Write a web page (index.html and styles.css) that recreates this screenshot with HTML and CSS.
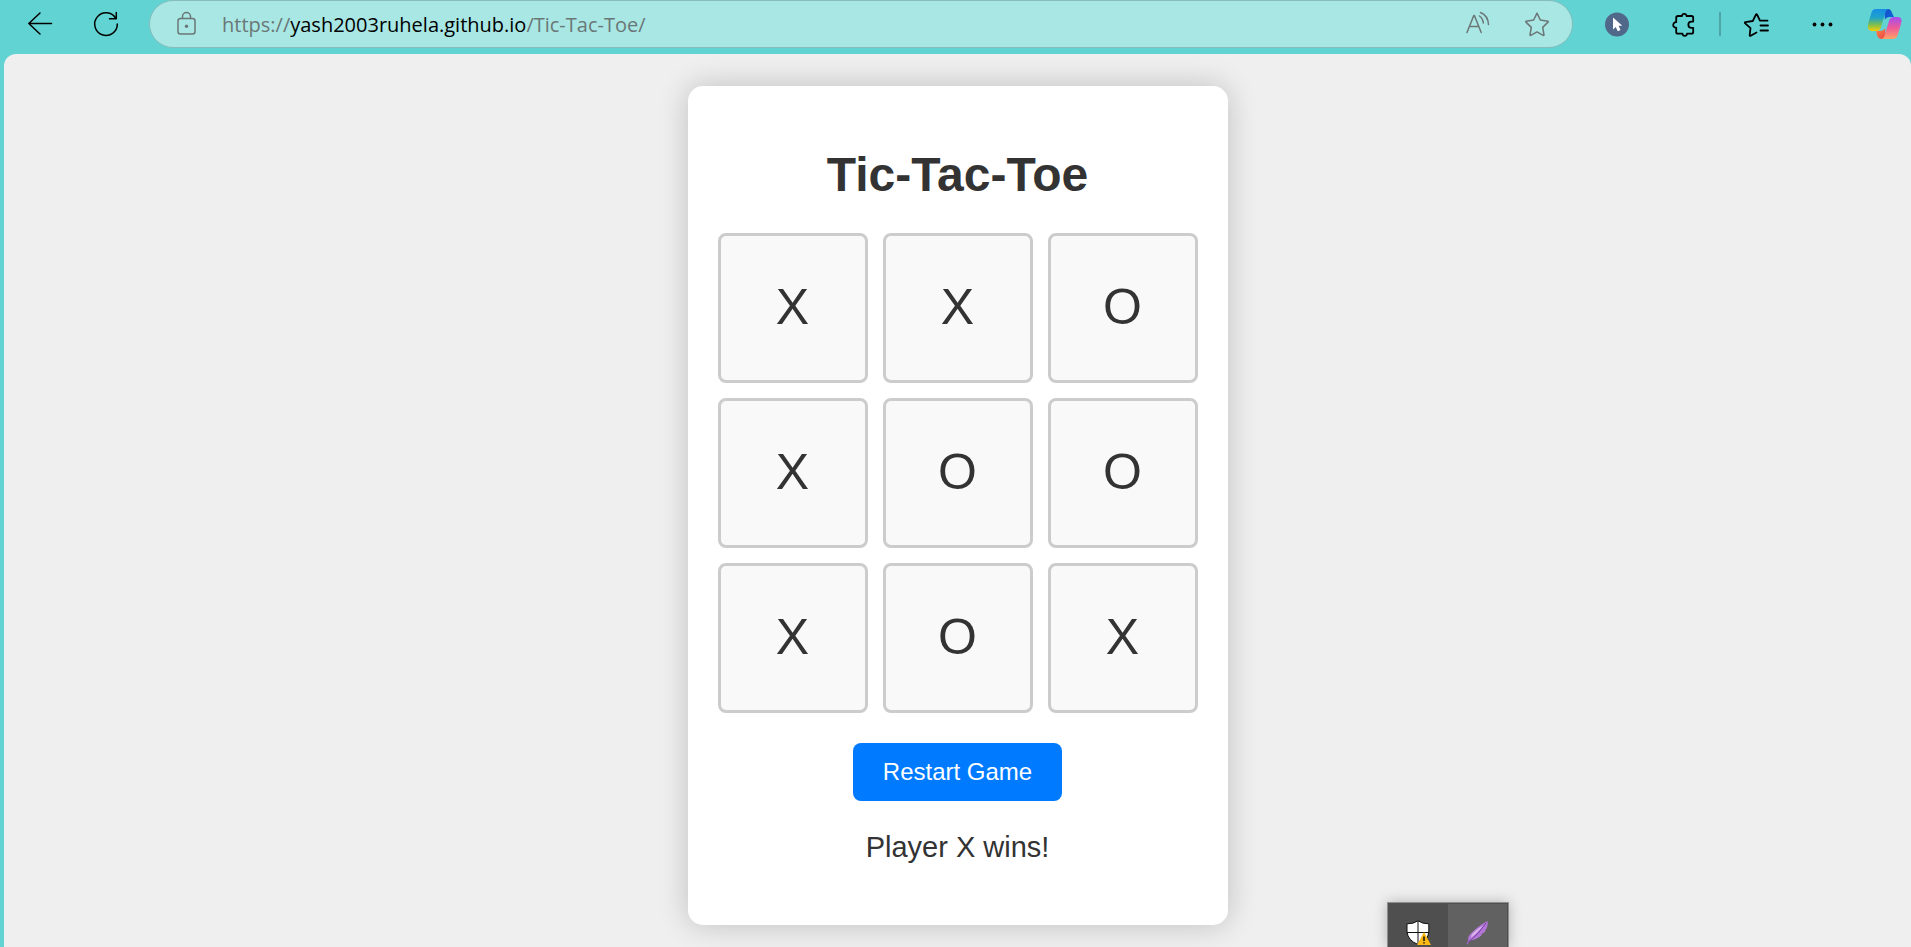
FILE: index.html
```html
<!DOCTYPE html>
<html lang="en">
<head>
<meta charset="utf-8">
<title>Tic-Tac-Toe</title>
<link rel="stylesheet" href="styles.css">
</head>
<body>
<header class="toolbar">
  <button class="tool" type="button" aria-label="Back">
    <svg class="icon" viewBox="0 0 24 24"><path d="M23.500 11.500H.8M12 1 .8 11.500 12 22"/></svg>
  </button>
  <button class="tool" type="button" aria-label="Refresh">
    <svg class="icon" viewBox="0 0 24 24"><path d="M21.800 6.500A11.300 11.300 0 1 0 23.300 12M22.300.5V6.800H15.500"/></svg>
  </button>
  <div class="address">
    <button class="address-tool lock" type="button" aria-label="Site information">
      <svg class="icon" viewBox="0 0 24 24"><rect x="4" y="6.500" width="17" height="15.500" rx="2.500"/><path d="M8.500 6.500V4.500a4 4 0 0 1 8 0v2"/><circle class="solid" cx="12.500" cy="14.200" r="1.700"/></svg>
    </button>
    <div class="url" role="textbox" contenteditable="true" spellcheck="false" aria-label="Address">https://<span class="host">yash2003ruhela.github.io</span>/Tic-Tac-Toe/</div>
    <button class="address-tool" type="button" aria-label="Read aloud">
      <svg class="icon" viewBox="0 0 24 24"><path d="M2 20.500 8.800 3.500h.6L16.200 20.500M4.500 14.500h9.300M14.500 4Q18 6.500 18.300 11M15.500 .5Q23 3.500 23.500 12.500"/></svg>
    </button>
    <button class="address-tool" type="button" aria-label="Add to favorites">
      <svg class="icon" viewBox="0 0 24 24"><path d="M12 1.200 15.300 8 22.900 9.200Q23.600 9.500 23 10.100L17.700 15.400 19 22.800Q18.900 23.600 18.200 23.300L12 19.900 5.800 23.300Q5 23.600 5 22.800L6.300 15.400 1 10.100Q.4 9.500 1.100 9.200L8.700 8Z"/></svg>
    </button>
  </div>
  <button class="tool" type="button" aria-label="Cursor extension">
    <svg class="icon" viewBox="0 0 24 24"><circle class="badge" cx="12" cy="12.500" r="12"/><path class="pointer" d="M8 5.500v12l2.800-2.500 1.900 4.200 2.800-1.200-1.900-4.200h3.700Z"/></svg>
  </button>
  <button class="tool" type="button" aria-label="Extensions">
    <svg class="icon bold" viewBox="0 0 24 24"><path d="M7 4H11C11.200 1.200 15.300 1.200 15.500 4H20.500Q22.200 4 22.200 5.800V9.600H20.500C16.300 9.600 16.300 15.900 20.500 15.900H22.200V20Q22.200 21.700 20.500 21.700H16C15.800 24.500 11.700 24.500 11.500 21.700H7Q5.200 21.700 5.200 20V15.700C1.200 15.900 1.200 10 5.200 10.200V5.800Q5.200 4 7 4"/></svg>
  </button>
  <span class="divider"></span>
  <button class="tool" type="button" aria-label="Favorites">
    <svg class="icon bold" viewBox="0 0 24 24"><path d="M11.500 20.500 5.700 23.800Q4.600 24.200 4.700 23L5.500 16.100-.1 11.100Q-.5 10.400.4 10.200L7.800 9 11 2.400Q11.500 1.900 12 2.500L15 8.700H22.500M15.500 13.500H23M15.500 18.500H23"/></svg>
  </button>
  <button class="tool" type="button" aria-label="Settings and more">
    <svg class="icon" viewBox="0 0 24 24"><g class="solid"><circle cx="3.500" cy="12.500" r="1.900"/><circle cx="11.500" cy="12.500" r="1.900"/><circle cx="19.500" cy="12.500" r="1.900"/></g></svg>
  </button>
  <button class="tool copilot" type="button" aria-label="Copilot">
    <svg class="logo" viewBox="0 0 36 32">
      <defs>
        <linearGradient id="cool" x1="0" y1="0" x2="0" y2="1"><stop offset="0" stop-color="#168de6"/><stop offset=".4" stop-color="#20a4c8"/><stop offset=".7" stop-color="#78bd55"/><stop offset="1" stop-color="#f8d000"/></linearGradient>
        <linearGradient id="warm" x1="0" y1="0" x2="0" y2="1"><stop offset="0" stop-color="#a34df0"/><stop offset=".5" stop-color="#ef5b98"/><stop offset="1" stop-color="#ffa463"/></linearGradient>
        <linearGradient id="fold" x1="0" y1="0" x2="1" y2="1"><stop offset="0" stop-color="#1b4bc9"/><stop offset="1" stop-color="#0c6adc"/></linearGradient>
        <linearGradient id="ember" x1="0" y1="0" x2="1" y2="1"><stop offset="0" stop-color="#ff8b42"/><stop offset="1" stop-color="#e8414a"/></linearGradient>
      </defs>
      <path fill="url(#fold)" d="M17 1H21Q24 1 25 5L27 9H23Q19 9 18 12Z"/>
      <path fill="url(#ember)" d="M9 23H13Q17 23 18 20L19 31H15Q11 31 10 27Z"/>
      <path fill="url(#cool)" d="M9 1H22Q19 1 18 6L14 19Q13 23 9 23H5Q0 23 1 16L4 6Q5 1 9 1Z"/>
      <path fill="url(#warm)" d="M27 9H31Q36 9 34 16L31 26Q30 31 26 31H14Q17 31 18 26L22 13Q23 9 27 9Z"/>
    </svg>
  </button>
</header>

<main class="page">
  <section class="card">
    <h1 class="title">Tic-Tac-Toe</h1>
    <div class="board">
      <button class="cell" type="button">X</button>
      <button class="cell" type="button">X</button>
      <button class="cell" type="button">O</button>
      <button class="cell" type="button">X</button>
      <button class="cell" type="button">O</button>
      <button class="cell" type="button">O</button>
      <button class="cell" type="button">X</button>
      <button class="cell" type="button">O</button>
      <button class="cell" type="button">X</button>
    </div>
    <button class="restart" type="button">Restart Game</button>
    <p class="status">Player X wins!</p>
  </section>
</main>

<aside class="tray">
  <button class="tray-item" type="button" aria-label="Security">
    <svg class="tray-icon" viewBox="0 0 24 26">
      <path fill="#fff" stroke="#111" d="M12 .8Q16.500 4 22.800 3.800V12Q22 20.500 12 24.500 2 20.500 1 12V3.800Q7.500 4 12 .8Z"/>
      <path stroke="#111" d="M12 1V24M1 12.500H23"/>
      <path fill="#fdb913" d="M18 12 25 25H11Z"/>
      <path stroke="#111" stroke-width="1.500" d="M18 16.500V21M18 22.200V23.600"/>
    </svg>
  </button>
  <button class="tray-item light" type="button" aria-label="Feather">
    <svg class="tray-icon" viewBox="0 0 24 26">
      <path fill="#b277d6" d="M22.500 1Q13 6 6 13.500 2 17 3.500 20L1.500 24 2.500 24.500 5 20.500Q12 19.500 17 15L16 14.500 20.500 11.500 20 10.500Q23.500 7 22.500 1Z"/>
      <path fill="#d9b5ec" d="M19 5Q10 10 6.500 15L6 18Q13 12 19 5Z"/>
      <path stroke="#7d3da8" d="M21 3Q14 14 2.500 23"/>
    </svg>
  </button>
</aside>
</body>
</html>
```
FILE: styles.css
```css
* {
  box-sizing: border-box;
}

body {
  margin: 0;
  min-height: 100vh;
  display: flex;
  flex-direction: column;
  overflow: hidden;
  background: #62d3d3;
  color: #333;
  font-family: "Liberation Sans", Arial, sans-serif;
}

button {
  margin: 0;
  padding: 0;
  border: 0;
  background: none;
  color: inherit;
  font-family: inherit;
  cursor: pointer;
}

svg {
  display: block;
  overflow: visible;
  fill: none;
}

/* Browser toolbar */
.toolbar {
  display: flex;
  align-items: flex-start;
  height: 54px;
  padding-left: 7px;
  color: #000;
}

.tool {
  display: grid;
  place-items: center;
  flex: 0 0 66px;
  height: 48px;
}

.copilot {
  flex-basis: 55px;
  padding-left: 3px;
}

.icon {
  width: 24px;
  height: 24px;
  stroke: currentColor;
  stroke-width: 1.5;
  stroke-linejoin: round;
  stroke-linecap: round;
}

.bold {
  stroke-width: 1.8;
}

.solid {
  fill: currentColor;
  stroke: none;
}

.badge {
  fill: #50698a;
  stroke: none;
}

.pointer {
  fill: #fff;
  stroke: none;
}

.logo {
  width: 36px;
  height: 32px;
}

.divider {
  width: 2px;
  height: 24px;
  margin: 12px 3px;
  background: #4da5a5;
}

.address {
  display: flex;
  align-items: center;
  flex: 1;
  height: 48px;
  margin: 0 11px 0 10px;
  padding-right: 5px;
  border: 1px solid #86bcbc;
  border-radius: 24px;
  background: #a8e7e4;
  color: #6b7777;
}

.address-tool {
  display: grid;
  place-items: center;
  flex: 0 0 60px;
  height: 46px;
}

.lock {
  flex-basis: 72px;
}

.url {
  flex: 1;
  padding-top: 2px;
  font-family: "Open Sans", "Noto Sans", sans-serif;
  font-size: 20px;
  line-height: 28px;
  white-space: nowrap;
  outline: 0;
}

.host {
  color: #000;
}

/* Game */
.page {
  flex: 1;
  display: flex;
  justify-content: center;
  align-items: flex-start;
  margin-left: 4px;
  padding: 32px 0 22px;
  border-radius: 12px 12px 0 0;
  background: #efefef;
}

.card {
  display: flex;
  flex-direction: column;
  align-items: center;
  padding: 61px 30px;
  border-radius: 15px;
  background: #fff;
  box-shadow: 0 0 30px rgba(0, 0, 0, 0.2);
}

.title {
  margin: 0 0 30px;
  font-size: 48px;
  line-height: 56px;
}

.board {
  display: grid;
  grid-template-columns: repeat(3, 150px);
  grid-auto-rows: 150px;
  gap: 15px;
}

.cell {
  padding-bottom: 2px;
  border: 3px solid #ccc;
  border-radius: 8px;
  background: #f9f9f9;
  font-size: 50px;
  line-height: 56px;
}

.restart {
  margin: 30px 0;
  padding: 15px 30px;
  border-radius: 8px;
  background: #007bff;
  color: #fff;
  font-size: 24px;
  line-height: 28px;
}

.status {
  margin: 0;
  font-size: 29px;
  line-height: 33px;
}

/* Overflow tray at the bottom of the screen */
.tray {
  position: fixed;
  right: 402px;
  bottom: 0;
  display: flex;
  width: 122px;
  height: 45px;
  border: 1px solid #8f8f8f;
  border-bottom: 0;
  background: #4f4f4f;
  box-shadow: 0 0 12px rgba(0, 0, 0, 0.25);
}

.tray-item {
  flex: 1;
  display: flex;
  justify-content: center;
  padding-top: 17px;
}

.light {
  margin: 1px 1px 0 0;
  padding-top: 16px;
  background: #616161;
}

.tray-icon {
  width: 24px;
  height: 26px;
}
```
